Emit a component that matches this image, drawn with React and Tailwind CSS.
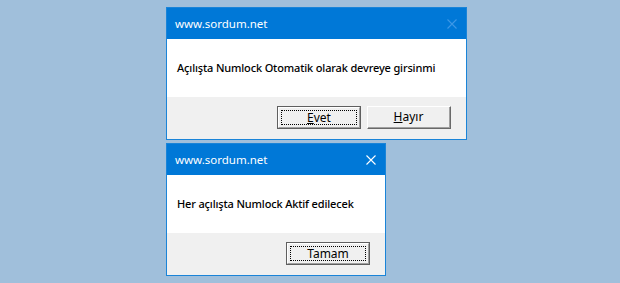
import React from "react";

const font = { fontFamily: '"Noto Sans", "Open Sans", Arial, sans-serif' };

const CloseX = ({ disabled }) => (
  <svg width="10" height="10" viewBox="0 0 10 10" className="block">
    <path
      d="M0.5 0.5 L9.5 9.5 M9.5 0.5 L0.5 9.5"
      stroke={disabled ? "#3d98e6" : "#ffffff"}
      strokeWidth="1.1"
      fill="none"
    />
  </svg>
);

const Button = ({ children, focused }) => {
  if (focused) {
    return (
      <button className="w-[84px] h-[23px] border border-[#5f5f5f] bg-[#f0f0f0] p-0">
        <div className="h-full w-full border-t border-l border-white border-r border-b border-r-[#a0a0a0] border-b-[#a0a0a0] p-[2px]">
          <div className="h-full w-full border border-dotted border-black flex items-center justify-center text-[12px] text-black leading-none">
            {children}
          </div>
        </div>
      </button>
    );
  }
  return (
    <button className="w-[84px] h-[23px] border-t border-l border-white border-r border-b border-r-[#696969] border-b-[#696969] bg-[#f0f0f0] p-0">
      <div className="h-full w-full border-r border-b border-r-[#a0a0a0] border-b-[#a0a0a0] flex items-center justify-center text-[12px] text-black leading-none">
        {children}
      </div>
    </button>
  );
};

const Dialog = ({ width, message, disabledClose, children }) => (
  <div className={`${width} h-[133px] border border-[#1a84d8] flex flex-col`}>
    <div className="h-[31px] bg-[#0078d7] flex items-center justify-between pl-2 pr-[9px]">
      <span className="text-white text-[11.5px]">www.sordum.net</span>
      <CloseX disabled={disabledClose} />
    </div>
    <div className="h-[58px] bg-white flex items-center pl-[10px]">
      <span className="text-black text-[11px] font-medium tracking-[-0.15px]">{message}</span>
    </div>
    <div className="h-[42px] bg-[#f0f0f0] flex justify-end items-start pt-[9px] pr-[15px] gap-[6px]">
      {children}
    </div>
  </div>
);

export default function App() {
  return (
    <div className="w-[620px] h-[283px] bg-[#a0bfdb] flex flex-col gap-[3px] pl-[166px] pt-[7px]" style={font}>
      <Dialog width="w-[301px]" message="Açılışta Numlock Otomatik olarak devreye girsinmi" disabledClose>
        <Button focused>
          <span><span className="underline">E</span>vet</span>
        </Button>
        <Button>
          <span><span className="underline">H</span>ayır</span>
        </Button>
      </Dialog>
      <Dialog width="w-[220px]" message="Her açılışta Numlock Aktif edilecek">
        <Button focused>Tamam</Button>
      </Dialog>
    </div>
  );
}
